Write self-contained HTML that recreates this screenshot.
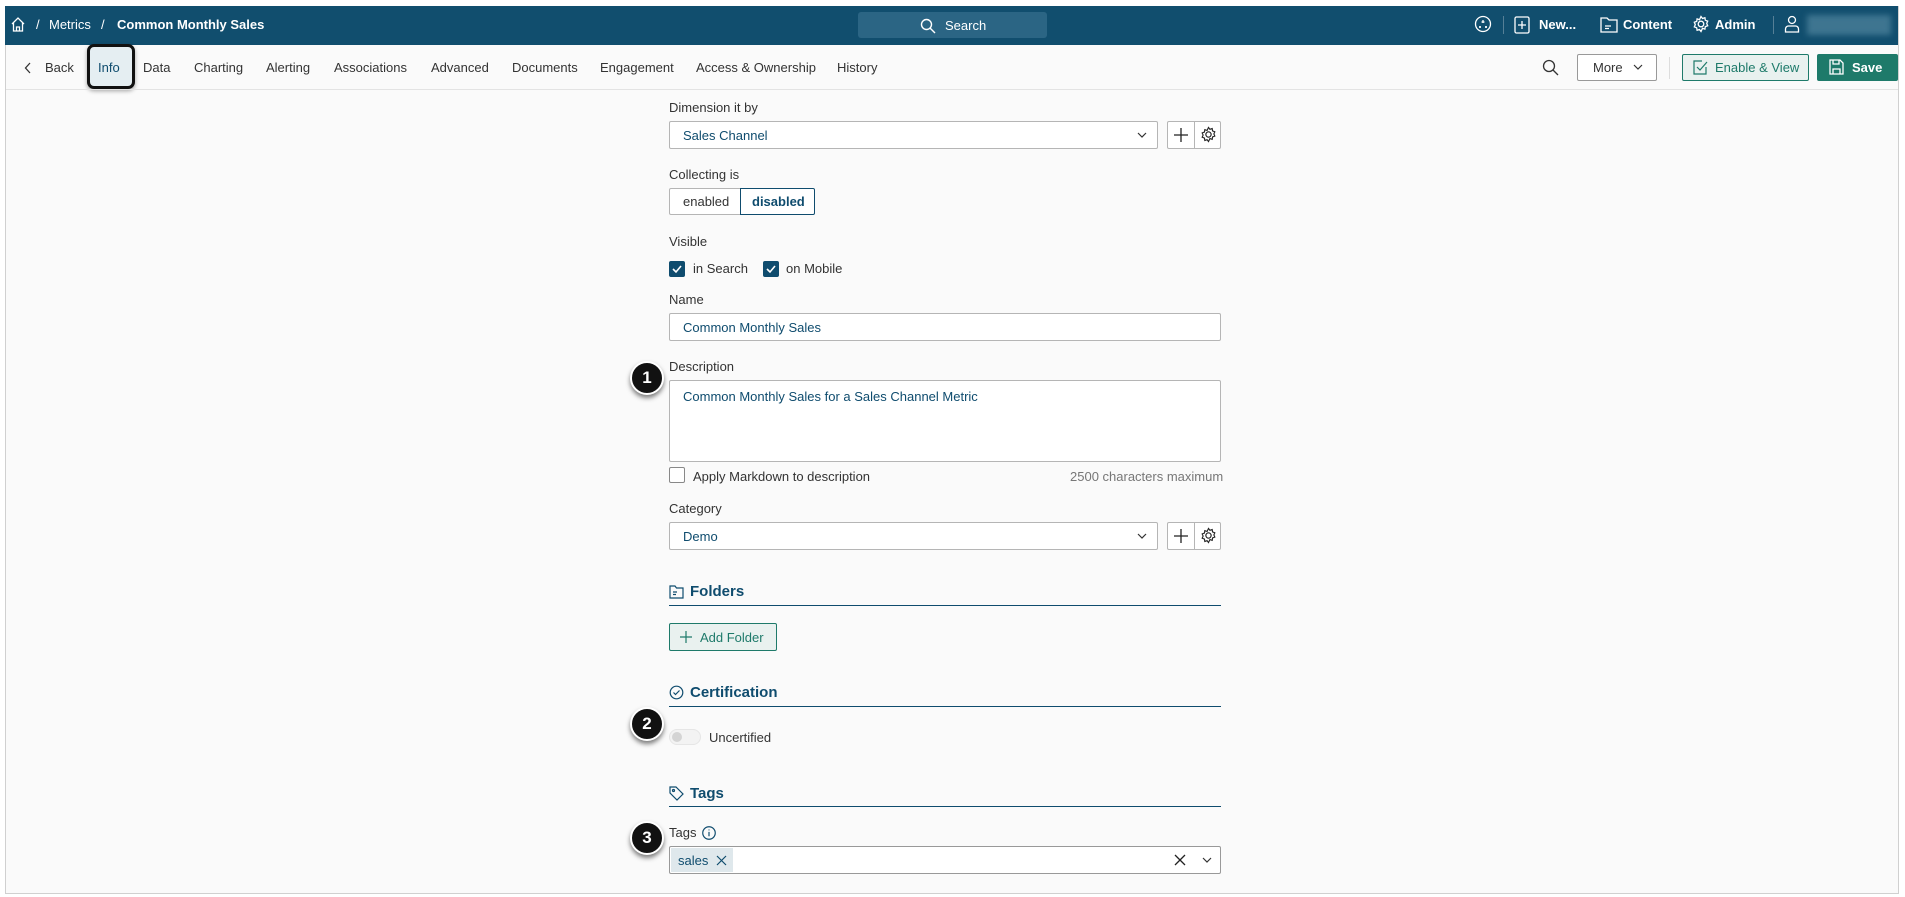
<!DOCTYPE html>
<html><head><meta charset="utf-8"><style>
*{box-sizing:border-box;margin:0;padding:0}
body{width:1905px;height:897px;background:#fff;font-family:"Liberation Sans",Arial,sans-serif;position:relative;overflow:hidden;color:#333}
.frame{position:absolute;left:5px;top:6px;width:1894px;height:888px;background:#fafafa;border:1px solid #d0d0d0;border-top:none}
.top{position:absolute;left:5px;top:6px;width:1893px;height:39px;background:#114e6e;color:#fff;font-size:13px}
.a{position:absolute;white-space:nowrap}
.nav{font-size:13px;color:#333;top:60px}
.lbl{font-size:13px;color:#333}
.box{position:absolute;border:1px solid #b5b5b5;background:#fff;border-radius:2px}
.val{color:#0f4c6e;font-size:13px}
.h{font-size:15px;font-weight:bold;color:#0f4c6e}
.line{position:absolute;left:669px;width:552px;height:1px;background:#0f4c6e}
.badge{position:absolute;width:34px;height:34px;border-radius:50%;background:#111;border:2px solid #fff;box-shadow:0 3px 5px rgba(0,0,0,.5);color:#fff;font-weight:bold;font-size:17px;text-align:center;line-height:30px}
.cb{position:absolute;width:16px;height:16px;background:#0f4c6e;border-radius:2px}
</style></head><body>
<div class="frame"></div>
<div class="top">
<svg class="a" style="left:5px;top:10px" width="16" height="17" viewBox="0 0 16 17" fill="none" stroke="#fff" stroke-width="1.3"><path d="M2 8L8 2l6 6M3.5 7v8h9V7M6.5 15v-4h3v4"/></svg>
<span class="a" style="left:31px;top:11px">/</span>
<span class="a" style="left:44px;top:11px">Metrics</span>
<span class="a" style="left:96px;top:11px">/</span>
<span class="a" style="left:112px;top:11px;font-weight:bold">Common Monthly Sales</span>
<div class="a" style="left:853px;top:6px;width:189px;height:26px;background:#2b6584;border-radius:3px"></div>
<svg class="a" style="left:915px;top:12px" width="16" height="16" viewBox="0 0 16 16" fill="none" stroke="#fff" stroke-width="1.4"><circle cx="6.5" cy="6.5" r="5"/><path d="M10 10l5 5"/></svg>
<span class="a" style="left:940px;top:12px">Search</span>
<svg class="a" style="left:1469px;top:9px" width="18" height="18" viewBox="0 0 18 18" fill="none" stroke="#fff" stroke-width="1.3"><circle cx="9" cy="9" r="7.5"/><path d="M9 5v3M7.5 7h3M6 11v2M5 12h2M12 11v2M11 12h2"/></svg>
<div class="a" style="left:1498px;top:10px;width:1px;height:18px;background:#557f96"></div>
<svg class="a" style="left:1509px;top:10px" width="16" height="18" viewBox="0 0 16 18" fill="none" stroke="#fff" stroke-width="1.3"><rect x="1" y="1" width="14" height="16" rx="1.5"/><path d="M8 5v8M4 9h8"/></svg>
<span class="a" style="left:1534px;top:11px;font-weight:bold">New...</span>
<svg class="a" style="left:1595px;top:10px" width="18" height="17" viewBox="0 0 18 17" fill="none" stroke="#fff" stroke-width="1.3"><path d="M1 2h6l2 2h8v12H1z M5 10h6M5 12.5h4"/></svg>
<span class="a" style="left:1618px;top:11px;font-weight:bold">Content</span>
<svg class="a" style="left:1687px;top:9px" width="18" height="18" viewBox="0 0 18 18" fill="none" stroke="#fff" stroke-width="1.3"><circle cx="9" cy="9" r="2.8"/><path d="M9 1.5l1.5 2 2.4-.8.4 2.5 2.4.9-1 2.3 1 2.3-2.4.9-.4 2.5-2.4-.8L9 16.5l-1.5-2-2.4.8-.4-2.5-2.4-.9 1-2.3-1-2.3 2.4-.9.4-2.5 2.4.8z"/></svg>
<span class="a" style="left:1710px;top:11px;font-weight:bold">Admin</span>
<div class="a" style="left:1768px;top:10px;width:1px;height:18px;background:#557f96"></div>
<svg class="a" style="left:1779px;top:9px" width="16" height="18" viewBox="0 0 16 18" fill="none" stroke="#fff" stroke-width="1.3"><circle cx="8" cy="5" r="3.5"/><path d="M1.5 17v-3a3 3 0 013-3h7a3 3 0 013 3v3z"/></svg>
<div class="a" style="left:1802px;top:9px;width:84px;height:20px;background:#3e7590;filter:blur(3px)"></div>
</div>
<!-- nav -->
<svg class="a" style="left:24px;top:62px" width="8" height="12" viewBox="0 0 8 12" fill="none" stroke="#333" stroke-width="1.3"><path d="M6 1L1.5 6 6 11"/></svg>
<span class="a nav" style="left:45px">Back</span>
<div class="a" style="left:87px;top:44px;width:48px;height:45px;border:3px solid #111;border-radius:7px;background:#e5eef2;box-shadow:0 2px 4px rgba(0,0,0,.35)"></div>
<span class="a nav" style="left:98px;color:#0f4c6e">Info</span>
<span class="a nav" style="left:143px">Data</span>
<span class="a nav" style="left:194px">Charting</span>
<span class="a nav" style="left:266px">Alerting</span>
<span class="a nav" style="left:334px">Associations</span>
<span class="a nav" style="left:431px">Advanced</span>
<span class="a nav" style="left:512px">Documents</span>
<span class="a nav" style="left:600px">Engagement</span>
<span class="a nav" style="left:696px">Access &amp; Ownership</span>
<span class="a nav" style="left:837px">History</span>
<svg class="a" style="left:1542px;top:59px" width="17" height="17" viewBox="0 0 17 17" fill="none" stroke="#333" stroke-width="1.3"><circle cx="7" cy="7" r="5.5"/><path d="M11 11l5 5"/></svg>
<div class="box" style="left:1577px;top:54px;width:80px;height:27px;border-color:#999"></div>
<span class="a nav" style="left:1593px;top:60px">More</span>
<svg class="a" style="left:1633px;top:64px" width="10" height="7" viewBox="0 0 10 7" fill="none" stroke="#333" stroke-width="1.2"><path d="M1 1l4 4 4-4"/></svg>
<div class="a" style="left:1669px;top:57px;width:1px;height:22px;background:#ddd"></div>
<div class="a" style="left:1682px;top:54px;width:127px;height:27px;border:1px solid #1e7a6a;background:#e9f1ef;border-radius:2px"></div>
<svg class="a" style="left:1693px;top:60px" width="15" height="15" viewBox="0 0 15 15" fill="none" stroke="#1e7a6a" stroke-width="1.2"><path d="M13 7v7H1V1h8M4 7l3 3 7-8"/></svg>
<span class="a nav" style="left:1715px;color:#1e7a6a">Enable &amp; View</span>
<div class="a" style="left:1817px;top:54px;width:81px;height:27px;background:#1e7a6a;border-radius:2px"></div>
<svg class="a" style="left:1829px;top:59px" width="15" height="16" viewBox="0 0 15 16" fill="none" stroke="#fff" stroke-width="1.3"><path d="M1 1h10l3 3v11H1z M4 1v4h6V1 M4 15v-5h7v5"/></svg>
<span class="a nav" style="left:1852px;color:#fff;font-weight:bold">Save</span>
<div class="a" style="left:6px;top:89px;width:1892px;height:1px;background:#e3e3e3"></div>

<!-- form -->
<span class="a lbl" style="left:669px;top:100px">Dimension it by</span>
<div class="box" style="left:669px;top:121px;width:489px;height:28px"></div>
<span class="a val" style="left:683px;top:128px">Sales Channel</span>
<svg class="a" style="left:1137px;top:132px" width="10" height="7" viewBox="0 0 10 7" fill="none" stroke="#333" stroke-width="1.2"><path d="M1 1l4 4 4-4"/></svg>
<div class="box" style="left:1167px;top:121px;width:54px;height:28px"></div>
<div class="a" style="left:1194px;top:122px;width:1px;height:26px;background:#b5b5b5"></div>
<svg class="a" style="left:1173px;top:127px" width="16" height="16" viewBox="0 0 16 16" stroke="#222" stroke-width="1.3"><path d="M8 1v14M1 8h14"/></svg>
<svg class="a" style="left:1200px;top:126px" width="17" height="17" viewBox="0 0 18 18" fill="none" stroke="#222" stroke-width="1.2"><circle cx="9" cy="9" r="2.8"/><path d="M9 1.5l1.5 2 2.4-.8.4 2.5 2.4.9-1 2.3 1 2.3-2.4.9-.4 2.5-2.4-.8L9 16.5l-1.5-2-2.4.8-.4-2.5-2.4-.9 1-2.3-1-2.3 2.4-.9.4-2.5 2.4.8z"/></svg>

<span class="a lbl" style="left:669px;top:167px">Collecting is</span>
<div class="box" style="left:669px;top:188px;width:72px;height:27px;border-radius:2px 0 0 2px"></div>
<span class="a lbl" style="left:683px;top:194px">enabled</span>
<div class="a" style="left:740px;top:188px;width:75px;height:27px;border:1px solid #0f4c6e;background:#fff;border-radius:0 2px 2px 0"></div>
<span class="a" style="left:752px;top:194px;font-size:13px;font-weight:bold;color:#0f4c6e">disabled</span>

<span class="a lbl" style="left:669px;top:234px">Visible</span>
<div class="cb" style="left:669px;top:261px"></div>
<svg class="a" style="left:671px;top:263px" width="12" height="12" viewBox="0 0 12 12" fill="none" stroke="#fff" stroke-width="1.6"><path d="M2 6l3 3 5-6"/></svg>
<span class="a lbl" style="left:693px;top:261px">in Search</span>
<div class="cb" style="left:763px;top:261px"></div>
<svg class="a" style="left:765px;top:263px" width="12" height="12" viewBox="0 0 12 12" fill="none" stroke="#fff" stroke-width="1.6"><path d="M2 6l3 3 5-6"/></svg>
<span class="a lbl" style="left:786px;top:261px">on Mobile</span>

<span class="a lbl" style="left:669px;top:292px">Name</span>
<div class="box" style="left:669px;top:313px;width:552px;height:28px"></div>
<span class="a val" style="left:683px;top:320px">Common Monthly Sales</span>

<span class="a lbl" style="left:669px;top:359px">Description</span>
<div class="box" style="left:669px;top:380px;width:552px;height:82px"></div>
<span class="a val" style="left:683px;top:389px">Common Monthly Sales for a Sales Channel Metric</span>
<div class="box" style="left:669px;top:467px;width:16px;height:16px;border-color:#888"></div>
<span class="a lbl" style="left:693px;top:469px">Apply Markdown to description</span>
<span class="a lbl" style="left:1070px;top:469px;color:#777">2500 characters maximum</span>

<span class="a lbl" style="left:669px;top:501px">Category</span>
<div class="box" style="left:669px;top:522px;width:489px;height:28px"></div>
<span class="a val" style="left:683px;top:529px">Demo</span>
<svg class="a" style="left:1137px;top:533px" width="10" height="7" viewBox="0 0 10 7" fill="none" stroke="#333" stroke-width="1.2"><path d="M1 1l4 4 4-4"/></svg>
<div class="box" style="left:1167px;top:522px;width:54px;height:28px"></div>
<div class="a" style="left:1194px;top:523px;width:1px;height:26px;background:#b5b5b5"></div>
<svg class="a" style="left:1173px;top:528px" width="16" height="16" viewBox="0 0 16 16" stroke="#222" stroke-width="1.3"><path d="M8 1v14M1 8h14"/></svg>
<svg class="a" style="left:1200px;top:527px" width="17" height="17" viewBox="0 0 18 18" fill="none" stroke="#222" stroke-width="1.2"><circle cx="9" cy="9" r="2.8"/><path d="M9 1.5l1.5 2 2.4-.8.4 2.5 2.4.9-1 2.3 1 2.3-2.4.9-.4 2.5-2.4-.8L9 16.5l-1.5-2-2.4.8-.4-2.5-2.4-.9 1-2.3-1-2.3 2.4-.9.4-2.5 2.4.8z"/></svg>

<svg class="a" style="left:669px;top:585px" width="15" height="14" viewBox="0 0 15 14" fill="none" stroke="#0f4c6e" stroke-width="1.2"><path d="M1 1h5l1.5 2H14v10H1z M4 7h4M4 9.5h3"/></svg>
<span class="a h" style="left:690px;top:583px">Folders</span>
<div class="line" style="top:605px"></div>
<div class="a" style="left:669px;top:623px;width:108px;height:28px;border:1px solid #1e7a6a;background:#e9f1ef;border-radius:2px"></div>
<svg class="a" style="left:680px;top:631px" width="12" height="12" viewBox="0 0 12 12" stroke="#1e7a6a" stroke-width="1.2"><path d="M6 0v12M0 6h12"/></svg>
<span class="a" style="left:700px;top:630px;font-size:13px;color:#1e7a6a">Add Folder</span>

<svg class="a" style="left:669px;top:685px" width="15" height="15" viewBox="0 0 15 15" fill="none" stroke="#0f4c6e" stroke-width="1.2"><circle cx="7.5" cy="7.5" r="6.3"/><path d="M4.5 7.5l2 2 4-4"/></svg>
<span class="a h" style="left:690px;top:684px">Certification</span>
<div class="line" style="top:706px"></div>
<div class="a" style="left:669px;top:729px;width:32px;height:16px;border-radius:8px;background:#f3f3f3;border:1px solid #e6e6e6"></div>
<div class="a" style="left:672px;top:732px;width:10px;height:10px;border-radius:50%;background:#d4d4d4"></div>
<span class="a lbl" style="left:709px;top:730px">Uncertified</span>

<svg class="a" style="left:669px;top:786px" width="15" height="15" viewBox="0 0 15 15" fill="none" stroke="#0f4c6e" stroke-width="1.2"><path d="M1 1h6l7 7-6 6-7-7z"/><circle cx="4.5" cy="4.5" r="1"/></svg>
<span class="a h" style="left:690px;top:785px">Tags</span>
<div class="line" style="top:806px"></div>
<span class="a lbl" style="left:669px;top:825px">Tags</span>
<svg class="a" style="left:702px;top:826px" width="14" height="14" viewBox="0 0 13 13" fill="none" stroke="#0f4c6e" stroke-width="1.1"><circle cx="6.5" cy="6.5" r="5.8"/><path d="M6.5 5.5v4M6.5 3.3v.8"/></svg>
<div class="box" style="left:669px;top:846px;width:552px;height:28px;border-color:#999"></div>
<div class="a" style="left:671px;top:848px;width:62px;height:24px;background:#dfe8ec"></div>
<span class="a val" style="left:678px;top:853px">sales</span>
<svg class="a" style="left:716px;top:855px" width="11" height="11" viewBox="0 0 11 11" stroke="#0f4c6e" stroke-width="1.2"><path d="M1 1l9 9M10 1l-9 9"/></svg>
<svg class="a" style="left:1174px;top:854px" width="12" height="12" viewBox="0 0 12 12" stroke="#222" stroke-width="1.3"><path d="M1 1l10 10M11 1L1 11"/></svg>
<svg class="a" style="left:1202px;top:857px" width="10" height="7" viewBox="0 0 10 7" fill="none" stroke="#333" stroke-width="1.2"><path d="M1 1l4 4 4-4"/></svg>

<div class="badge" style="left:630px;top:361px">1</div>
<div class="badge" style="left:630px;top:707px">2</div>
<div class="badge" style="left:630px;top:821px">3</div>
</body></html>
